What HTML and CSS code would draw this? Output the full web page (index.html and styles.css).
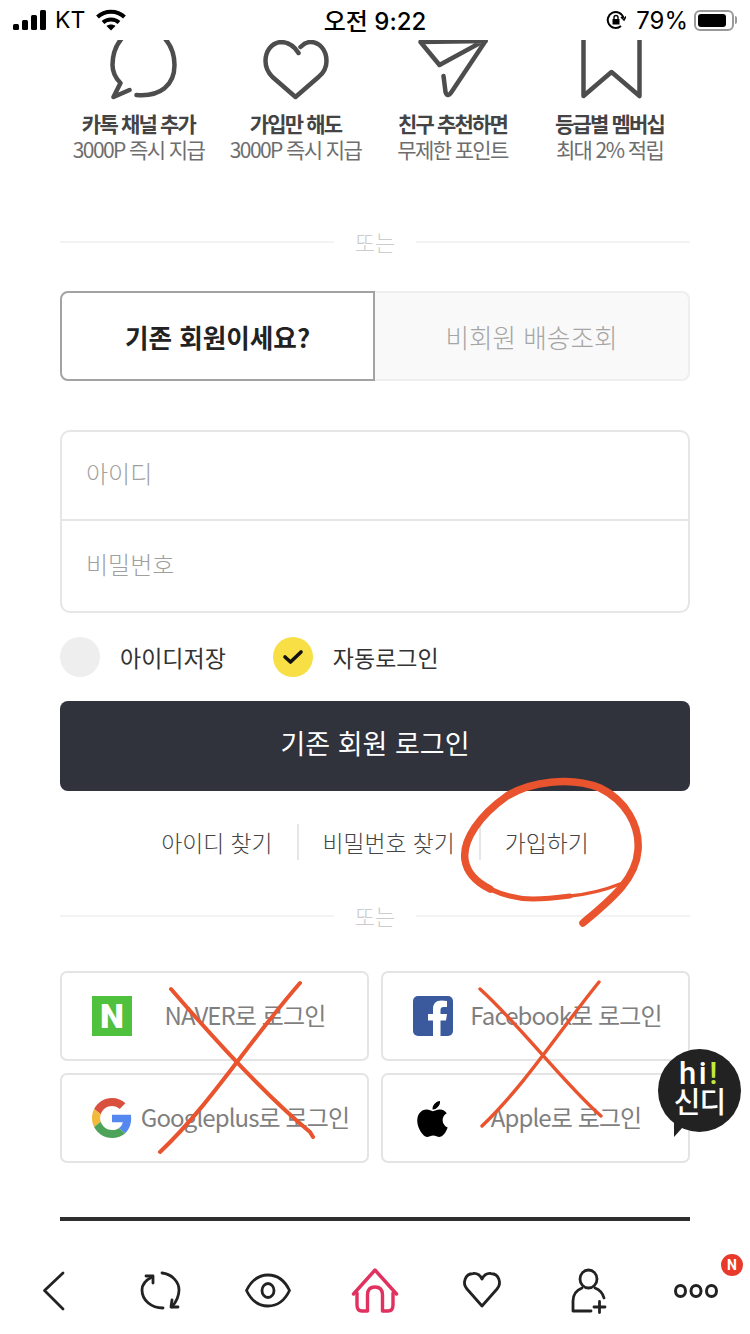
FILE: index.html
```html
<!DOCTYPE html>
<html lang="ko">
<head>
    <meta charset="UTF-8">
    <meta name="viewport" content="width=device-width, initial-scale=1.0">
    <title>로그인</title>
    <link rel="stylesheet" href="styles.css">
</head>
<body>
<div class="page">
    <!-- Status bar -->
    <div class="status">
        <div class="status-left">
            <svg class="signal" width="34" height="20" viewBox="0 0 34 20" fill="#000">
                <rect x="0" y="14" width="6" height="6" rx="1.5"/>
                <rect x="9" y="10" width="6" height="10" rx="1.5"/>
                <rect x="18" y="5" width="6" height="15" rx="1.5"/>
                <rect x="27" y="0" width="6" height="20" rx="1.5"/>
            </svg>
            <span class="carrier">KT</span>
            <svg class="wifi" width="30" height="22" viewBox="0 0 30 22" fill="none" stroke="#000" stroke-width="4">
                <path d="M1.5 8 C9 1,21 1,28.5 8"/>
                <path d="M7 13.5 C11.5 9.5,18.5 9.5,23 13.5"/>
                <path d="M15 21.5 L10.5 17 C13 15,17 15,19.5 17 Z" fill="#000" stroke="none"/>
            </svg>
        </div>
        <div class="status-time">오전 9:22</div>
        <div class="status-right">
            <svg width="20" height="20" viewBox="0 0 20 20" fill="none" stroke="#000" stroke-width="2">
                <path d="M15 16 A8 8 0 1 1 17.5 8"/>
                <path d="M15 7 L18 10 L20 6.5" stroke-width="1.6"/>
                <rect x="6.5" y="9" width="7" height="5.5" fill="#000" stroke="none"/>
                <path d="M8 9 V7.5 A2 2 0 0 1 12 7.5 V9" stroke-width="1.4"/>
            </svg>
            <span class="battery-pct">79%</span>
            <div class="battery"><div class="battery-level"></div></div>
            <div class="battery-cap"></div>
        </div>
    </div>

    <!-- Benefits -->
    <div class="benefits">
        <div class="benefit">
            <svg class="benefit-icon" width="80" height="60" viewBox="98.5 40 80 60" fill="none" stroke="#4d4d4d" stroke-width="4.5" stroke-linecap="round" stroke-linejoin="round">
                <path d="M136 95 C160 97,174 85,174 65 C174 45,160 28,143 28 C125 28,112 45,112 65 C112 72,115 78,120 83 L113 97 L129 90"/>
            </svg>
            <div class="benefit-title">카톡 채널 추가</div>
            <div class="benefit-sub">3000P 즉시 지급</div>
        </div>
        <div class="benefit">
            <svg class="benefit-icon" width="80" height="60" viewBox="255.5 40 80 60" fill="none" stroke="#4d4d4d" stroke-width="4.5" stroke-linecap="round" stroke-linejoin="round">
                <path d="M298 53 C293 45,286 42,280 42 C271 43,265 51,265 61 C265 68,268 73,272 77 L295 97 L318 77 C323 73,326 67,326 61 C326 50,319 42,310 42 C306 42,303 44,300 47"/>
            </svg>
            <div class="benefit-title">가입만 해도</div>
            <div class="benefit-sub">3000P 즉시 지급</div>
        </div>
        <div class="benefit">
            <svg class="benefit-icon" width="80" height="60" viewBox="413.5 40 80 60" fill="none" stroke="#4d4d4d" stroke-width="4.5" stroke-linecap="round" stroke-linejoin="round">
                <path d="M486 41 L421 42 L440 65 L484 41"/>
                <path d="M486 41 L452 92 Q448 98 446 92 L444 76"/>
            </svg>
            <div class="benefit-title">친구 추천하면</div>
            <div class="benefit-sub">무제한 포인트</div>
        </div>
        <div class="benefit">
            <svg class="benefit-icon" width="80" height="60" viewBox="569.5 40 80 60" fill="none" stroke="#4d4d4d" stroke-width="4.5" stroke-linecap="round" stroke-linejoin="round">
                <path d="M583 35 V96 L611 72 L639 96 V35"/>
            </svg>
            <div class="benefit-title">등급별 멤버십</div>
            <div class="benefit-sub">최대 2% 적립</div>
        </div>
    </div>

    <div class="divider first-divider"><span>또는</span></div>

    <!-- Tabs -->
    <div class="tabs">
        <div class="tab tab-active">기존 회원이세요?</div>
        <div class="tab">비회원 배송조회</div>
    </div>

    <!-- Login form -->
    <div class="login-box">
        <div class="login-row login-row-top">아이디</div>
        <div class="login-row">비밀번호</div>
    </div>

    <div class="checks">
        <div class="check-item">
            <span class="check-circle"></span>
            <span>아이디저장</span>
        </div>
        <div class="check-item">
            <span class="check-circle check-on">
                <svg width="22" height="18" viewBox="0 0 22 18" fill="none" stroke="#111" stroke-width="3.6" stroke-linecap="round" stroke-linejoin="round">
                    <path d="M3 9 L8.5 14 L19 4"/>
                </svg>
            </span>
            <span>자동로그인</span>
        </div>
    </div>

    <div class="login-button">기존 회원 로그인</div>

    <div class="links">
        <a>아이디 찾기</a>
        <i></i>
        <a>비밀번호 찾기</a>
        <i></i>
        <a>가입하기</a>
    </div>

    <div class="divider"><span>또는</span></div>

    <!-- Social login -->
    <div class="social">
        <div class="social-button">
            <span class="social-icon naver-icon">N</span>
            <span class="social-text">NAVER로 로그인</span>
        </div>
        <div class="social-button">
            <span class="social-icon">
                <svg width="40" height="40" viewBox="0 0 40 40">
                    <rect width="40" height="40" rx="5" fill="#3b5a9e"/>
                    <path d="M27.5 40 V24.5 H33 L34 18 H27.5 V14 C27.5 12,28.5 11,30.5 11 H34 V5 C32.5 4.8,30.5 4.6,28.5 4.6 C23 4.6,20 8,20 13 V18 H15 V24.5 H20 V40 Z" fill="#fff"/>
                </svg>
            </span>
            <span class="social-text">Facebook로 로그인</span>
        </div>
        <div class="social-button">
            <span class="social-icon">
                <svg width="40" height="40" viewBox="0 0 48 48">
                    <path fill="#d9503f" d="M24 9.5c3.54 0 6.71 1.22 9.21 3.6l6.85-6.85C35.9 2.38 30.47 0 24 0 14.62 0 6.51 5.38 2.56 13.22l7.98 6.19C12.43 13.72 17.74 9.5 24 9.5z"/>
                    <path fill="#5588ee" d="M46.98 24.55c0-1.57-.15-3.09-.38-4.55H24v9.02h12.94c-.58 2.96-2.26 5.48-4.78 7.18l7.73 6c4.51-4.18 7.09-10.36 7.09-17.65z"/>
                    <path fill="#f2b93d" d="M10.53 28.59c-.48-1.45-.76-2.99-.76-4.59s.27-3.14.76-4.59l-7.98-6.19C.92 16.46 0 20.12 0 24c0 3.88.92 7.54 2.56 10.78l7.97-6.19z"/>
                    <path fill="#4ea35a" d="M24 48c6.48 0 11.93-2.13 15.89-5.81l-7.73-6c-2.15 1.45-4.92 2.3-8.16 2.3-6.26 0-11.57-4.22-13.47-9.91l-7.98 6.19C6.51 42.62 14.62 48 24 48z"/>
                </svg>
            </span>
            <span class="social-text">Googleplus로 로그인</span>
        </div>
        <div class="social-button">
            <span class="social-icon">
                <svg width="40" height="40" viewBox="2.5 1.5 19.5 20" fill="#000">
                    <path d="M17.05 20.28c-.98.95-2.05.8-3.08.35-1.09-.46-2.09-.48-3.24 0-1.44.62-2.2.44-3.06-.35C2.79 15.25 3.51 7.59 9.05 7.31c1.35.07 2.29.74 3.08.8 1.18-.24 2.31-.93 3.57-.84 1.51.12 2.65.72 3.4 1.8-3.12 1.87-2.38 5.98.48 7.13-.57 1.5-1.31 2.99-2.54 4.09zM12.03 7.25c-.15-2.23 1.66-4.07 3.74-4.25.29 2.58-2.34 4.5-3.74 4.25z"/>
                </svg>
            </span>
            <span class="social-text">Apple로 로그인</span>
        </div>
    </div>

    <div class="thick-line"></div>

    <!-- Bottom nav -->
    <div class="bottom-nav">
        <div class="nav-item">
            <svg width="50" height="50" viewBox="0 0 50 50" fill="none" stroke="#222" stroke-width="2.8" stroke-linecap="round" stroke-linejoin="round">
                <path d="M34 8 L15.5 25.5 L34 44"/>
            </svg>
        </div>
        <div class="nav-item">
            <svg width="50" height="50" viewBox="0 0 50 50" fill="none" stroke="#222" stroke-width="2.8" stroke-linecap="round" stroke-linejoin="round">
                <path d="M16 12 C8 16,6 21,6 25 C6 35,15 43,27 43"/>
                <path d="M10 11 L17 11 L17 18"/>
                <path d="M26 8 C36 9,43 17,43 25 C43 31,40 37,36 42"/>
                <path d="M42 42 L35 42 L36 35"/>
            </svg>
        </div>
        <div class="nav-item">
            <svg width="50" height="50" viewBox="0 0 50 50" fill="none" stroke="#222" stroke-width="2.8" stroke-linejoin="round">
                <path d="M3.5 25.5 C9 14,17 10,25 10 C33 10,41 14,46.5 25.5 C41 37,33 41,25 41 C17 41,9 37,3.5 25.5 Z"/>
                <ellipse cx="25" cy="25.5" rx="6" ry="7"/>
            </svg>
        </div>
        <div class="nav-item">
            <svg width="50" height="50" viewBox="0 0 50 50" fill="none" stroke="#e0315f" stroke-width="3.4" stroke-linecap="round" stroke-linejoin="round">
                <path d="M3.5 29 L25 5 L46.5 29"/>
                <path d="M7 28 V40 Q7 46 12 46 H17.5 V30 Q17.5 22 25 22 Q32.5 22 32.5 30 V46 H38 Q43 46 43 40 V28"/>
            </svg>
        </div>
        <div class="nav-item">
            <svg width="50" height="50" viewBox="0 0 50 50" fill="none" stroke="#222" stroke-width="2.8" stroke-linejoin="round">
                <path d="M25 41 L10 24 C5 18,8 9,16 8.5 C20 8,23 10,25 14 C27 10,30 8,34 8.5 C42 9,45 18,40 24 Z"/>
            </svg>
        </div>
        <div class="nav-item">
            <svg width="50" height="50" viewBox="0 0 50 50" fill="none" stroke="#222" stroke-width="2.8" stroke-linecap="round" stroke-linejoin="round">
                <ellipse cx="24.5" cy="14" rx="8.5" ry="9"/>
                <path d="M27 46 H9 V36 C9 29,13 25,18 23"/>
                <path d="M31 23 C36 25,39 29,40 33"/>
                <path d="M30 42 H41 M35.5 36.5 V47.5"/>
            </svg>
        </div>
        <div class="nav-item">
            <svg width="50" height="50" viewBox="0 0 50 50" fill="none" stroke="#222" stroke-width="3">
                <ellipse cx="9.5" cy="26" rx="5" ry="5.5"/>
                <ellipse cx="25" cy="26" rx="5" ry="5.5"/>
                <ellipse cx="40.5" cy="26" rx="5" ry="5.5"/>
            </svg>
            <span class="nav-badge">N</span>
        </div>
    </div>

    <!-- Red pen marks over the page -->
    <svg class="pen-marks" width="750" height="1334" viewBox="0 0 750 1334" fill="none" stroke="#e9532d" stroke-linecap="round" stroke-linejoin="round">
        <path d="M620 884 C605 890,590 894,570 896" stroke-width="3.5"/>
        <path d="M570 896 C555 898,545 899,533 899 C518 899,505 896,490 889" stroke-width="5"/>
        <path d="M490 889 C478 883,467 873,465 860 C462 840,480 815,507 796 C530 782,570 776,600 788 C625 800,640 825,638 850 C636 880,610 900,583 923" stroke-width="7.5"/>
        <path d="M171 989 C215 1040,265 1095,310 1132 L313 1137" stroke-width="4"/>
        <path d="M300 983 C250 1040,210 1105,160 1152" stroke-width="4"/>
        <path d="M480 989 C520 1025,565 1085,601 1116" stroke-width="3.4"/>
        <path d="M599 982 C560 1030,525 1085,482 1126" stroke-width="3.4"/>
    </svg>

    <!-- Chat bubble -->
    <div class="chat-bubble">
        <div class="chat-hi">hi<em>!</em></div>
        <div class="chat-name">신디</div>
    </div>
</div>
</body>
</html>
```

FILE: styles.css
```css
/* General styles */
body {
    margin: 0;
    padding: 0;
    background-color: #fff;
    font-family: "Noto Sans CJK KR", "Noto Sans", sans-serif;
}

.page {
    position: relative;
    width: 750px;
    height: 1334px;
    overflow: hidden;
}

/* Status bar */
.status {
    display: grid;
    grid-template-columns: 1fr auto 1fr;
    align-items: center;
    height: 40px;
    padding: 0 13px;
    box-sizing: border-box;
    color: #000;
    font-family: "Inter", "Noto Sans CJK KR", sans-serif;
    font-size: 22px;
}

.status-left {
    display: flex;
    align-items: center;
}

.carrier {
    margin-left: 8px;
    font-size: 23px;
}

.wifi {
    margin-left: 11px;
}

.status-time {
    padding-bottom: 2px;
    font-weight: 500;
    font-size: 24px;
}

.status-right {
    display: flex;
    align-items: center;
    justify-content: flex-end;
}

.battery-pct {
    margin-left: 10px;
    font-size: 24px;
}

.battery {
    box-sizing: border-box;
    width: 40px;
    height: 21px;
    margin-left: 6px;
    padding: 2px;
    border: 2px solid #999;
    border-radius: 6px;
}

.battery-level {
    width: 28px;
    height: 13px;
    background-color: #000;
    border-radius: 3px;
}

.battery-cap {
    width: 2px;
    height: 8px;
    margin-left: 1px;
    background-color: #999;
    border-radius: 0 2px 2px 0;
}

/* Benefits */
.benefits {
    display: grid;
    grid-template-columns: repeat(4, 157px);
    margin: 0 60px;
}

.benefit {
    text-align: center;
}

.benefit-icon {
    display: block;
    margin: 0 auto 10px;
}

.benefit-title {
    height: 26px;
    line-height: 26px;
    font-size: 21px;
    font-weight: 700;
    letter-spacing: -1.8px;
    color: #444;
    white-space: nowrap;
}

.benefit-sub {
    height: 26px;
    line-height: 26px;
    font-size: 21px;
    letter-spacing: -1.6px;
    color: #6e6e6e;
    white-space: nowrap;
}

/* Divider */
.divider {
    display: flex;
    align-items: center;
    gap: 21px;
    box-sizing: border-box;
    height: 30px;
    margin: 41px 60px 0;
    font-size: 22px;
    font-weight: 300;
    color: #ccc;
}

.divider span {
    padding-bottom: 2px;
}

.divider::before,
.divider::after {
    content: "";
    flex: 1;
    height: 2px;
    background-color: #f3f3f3;
}

.first-divider {
    margin-top: 65px;
}

/* Tabs */
.tabs {
    display: flex;
    height: 90px;
    margin: 34px 60px 0;
}

.tab {
    display: flex;
    flex: 1;
    align-items: center;
    justify-content: center;
    box-sizing: border-box;
    background-color: #f9f9f9;
    border: 2px solid #eee;
    border-left: none;
    border-radius: 0 8px 8px 0;
    font-size: 25.6px;
    font-weight: 300;
    color: #a5a5a5;
}

.tab-active {
    flex: 0 0 315px;
    background-color: #fff;
    border: 2px solid #a3a3a3;
    border-radius: 8px 0 0 8px;
    font-weight: 700;
    color: #222;
}

/* Login form */
.login-box {
    box-sizing: border-box;
    height: 183px;
    margin: 49px 60px 0;
    border: 2px solid #e6e6e6;
    border-radius: 10px;
}

.login-row {
    display: flex;
    align-items: center;
    box-sizing: border-box;
    height: 90px;
    padding: 0 0 6px 24px;
    font-size: 24px;
    font-weight: 300;
    color: #a0a0a0;
}

.login-row-top {
    height: 89px;
    border-bottom: 2px solid #e6e6e6;
}

.checks {
    display: flex;
    gap: 47px;
    margin: 24px 60px 0;
    font-size: 23px;
    color: #333;
}

.check-item {
    display: flex;
    align-items: center;
    gap: 20px;
}

.check-circle {
    display: flex;
    align-items: center;
    justify-content: center;
    width: 40px;
    height: 40px;
    background-color: #eee;
    border-radius: 50%;
}

.check-on {
    background-color: #f7df45;
}

.login-button {
    display: flex;
    align-items: center;
    justify-content: center;
    box-sizing: border-box;
    height: 90px;
    margin: 24px 60px 0;
    padding-bottom: 8px;
    background-color: #30333c;
    border-radius: 8px;
    font-size: 27px;
    color: #fff;
}

/* Links under the button */
.links {
    display: flex;
    align-items: center;
    justify-content: center;
    gap: 24px;
    height: 36px;
    margin-top: 33px;
    font-size: 22.8px;
    font-weight: 300;
    color: #444;
}

.links a {
    padding-top: 1px;
    line-height: 30px;
}

.links i {
    width: 2px;
    height: 36px;
    background-color: #e6e6e6;
}

/* Social login */
.social {
    display: grid;
    grid-template-columns: 1fr 1fr;
    gap: 12px;
    margin: 40px 60px 0;
}

.social-button {
    display: flex;
    align-items: center;
    box-sizing: border-box;
    height: 90px;
    padding: 0 9px 0 30px;
    border: 2px solid #e4e4e4;
    border-radius: 7px;
}

.social-icon {
    flex: 0 0 40px;
    width: 40px;
    height: 40px;
}

.social-icon svg {
    display: block;
}

.naver-icon {
    background-color: #4fc13e;
    color: #fff;
    font-family: "Roboto", "Liberation Sans", sans-serif;
    font-size: 34px;
    font-weight: 900;
    line-height: 40px;
    text-align: center;
}

.social-text {
    flex: 1;
    padding-bottom: 4px;
    font-size: 24px;
    letter-spacing: -0.9px;
    color: #7f7f7f;
    text-align: center;
    white-space: nowrap;
}

.thick-line {
    height: 4px;
    margin: 54px 60px 0;
    background-color: #2e2e2e;
}

/* Bottom nav */
.bottom-nav {
    display: grid;
    grid-template-columns: repeat(7, 1fr);
    margin-top: 44px;
}

.nav-item {
    position: relative;
    display: flex;
    justify-content: center;
    height: 50px;
}

.nav-badge {
    position: absolute;
    top: -11px;
    right: 7px;
    width: 22px;
    height: 22px;
    background-color: #e8392a;
    border-radius: 50%;
    color: #fff;
    font-family: "Roboto", sans-serif;
    font-size: 14px;
    font-weight: 700;
    line-height: 22px;
    text-align: center;
}

/* Overlays */
.pen-marks {
    position: absolute;
    top: 0;
    left: 0;
    pointer-events: none;
}

.chat-bubble {
    position: absolute;
    top: 1049px;
    left: 658px;
    box-sizing: border-box;
    width: 83px;
    height: 83px;
    padding-top: 11px;
    background-color: #222;
    border-radius: 50%;
    color: #fff;
    text-align: center;
}

.chat-bubble::after {
    content: "";
    position: absolute;
    top: 68px;
    left: 16px;
    border-top: 20px solid #222;
    border-right: 18px solid transparent;
}

.chat-hi {
    height: 27px;
    line-height: 27px;
    font-family: "Roboto", sans-serif;
    font-size: 31px;
    font-weight: 500;
    letter-spacing: 2.5px;
}

.chat-hi em {
    font-style: normal;
    color: #c6e83a;
}

.chat-name {
    height: 27px;
    line-height: 27px;
    font-size: 29px;
    font-weight: 500;
    letter-spacing: -1px;
}
```
